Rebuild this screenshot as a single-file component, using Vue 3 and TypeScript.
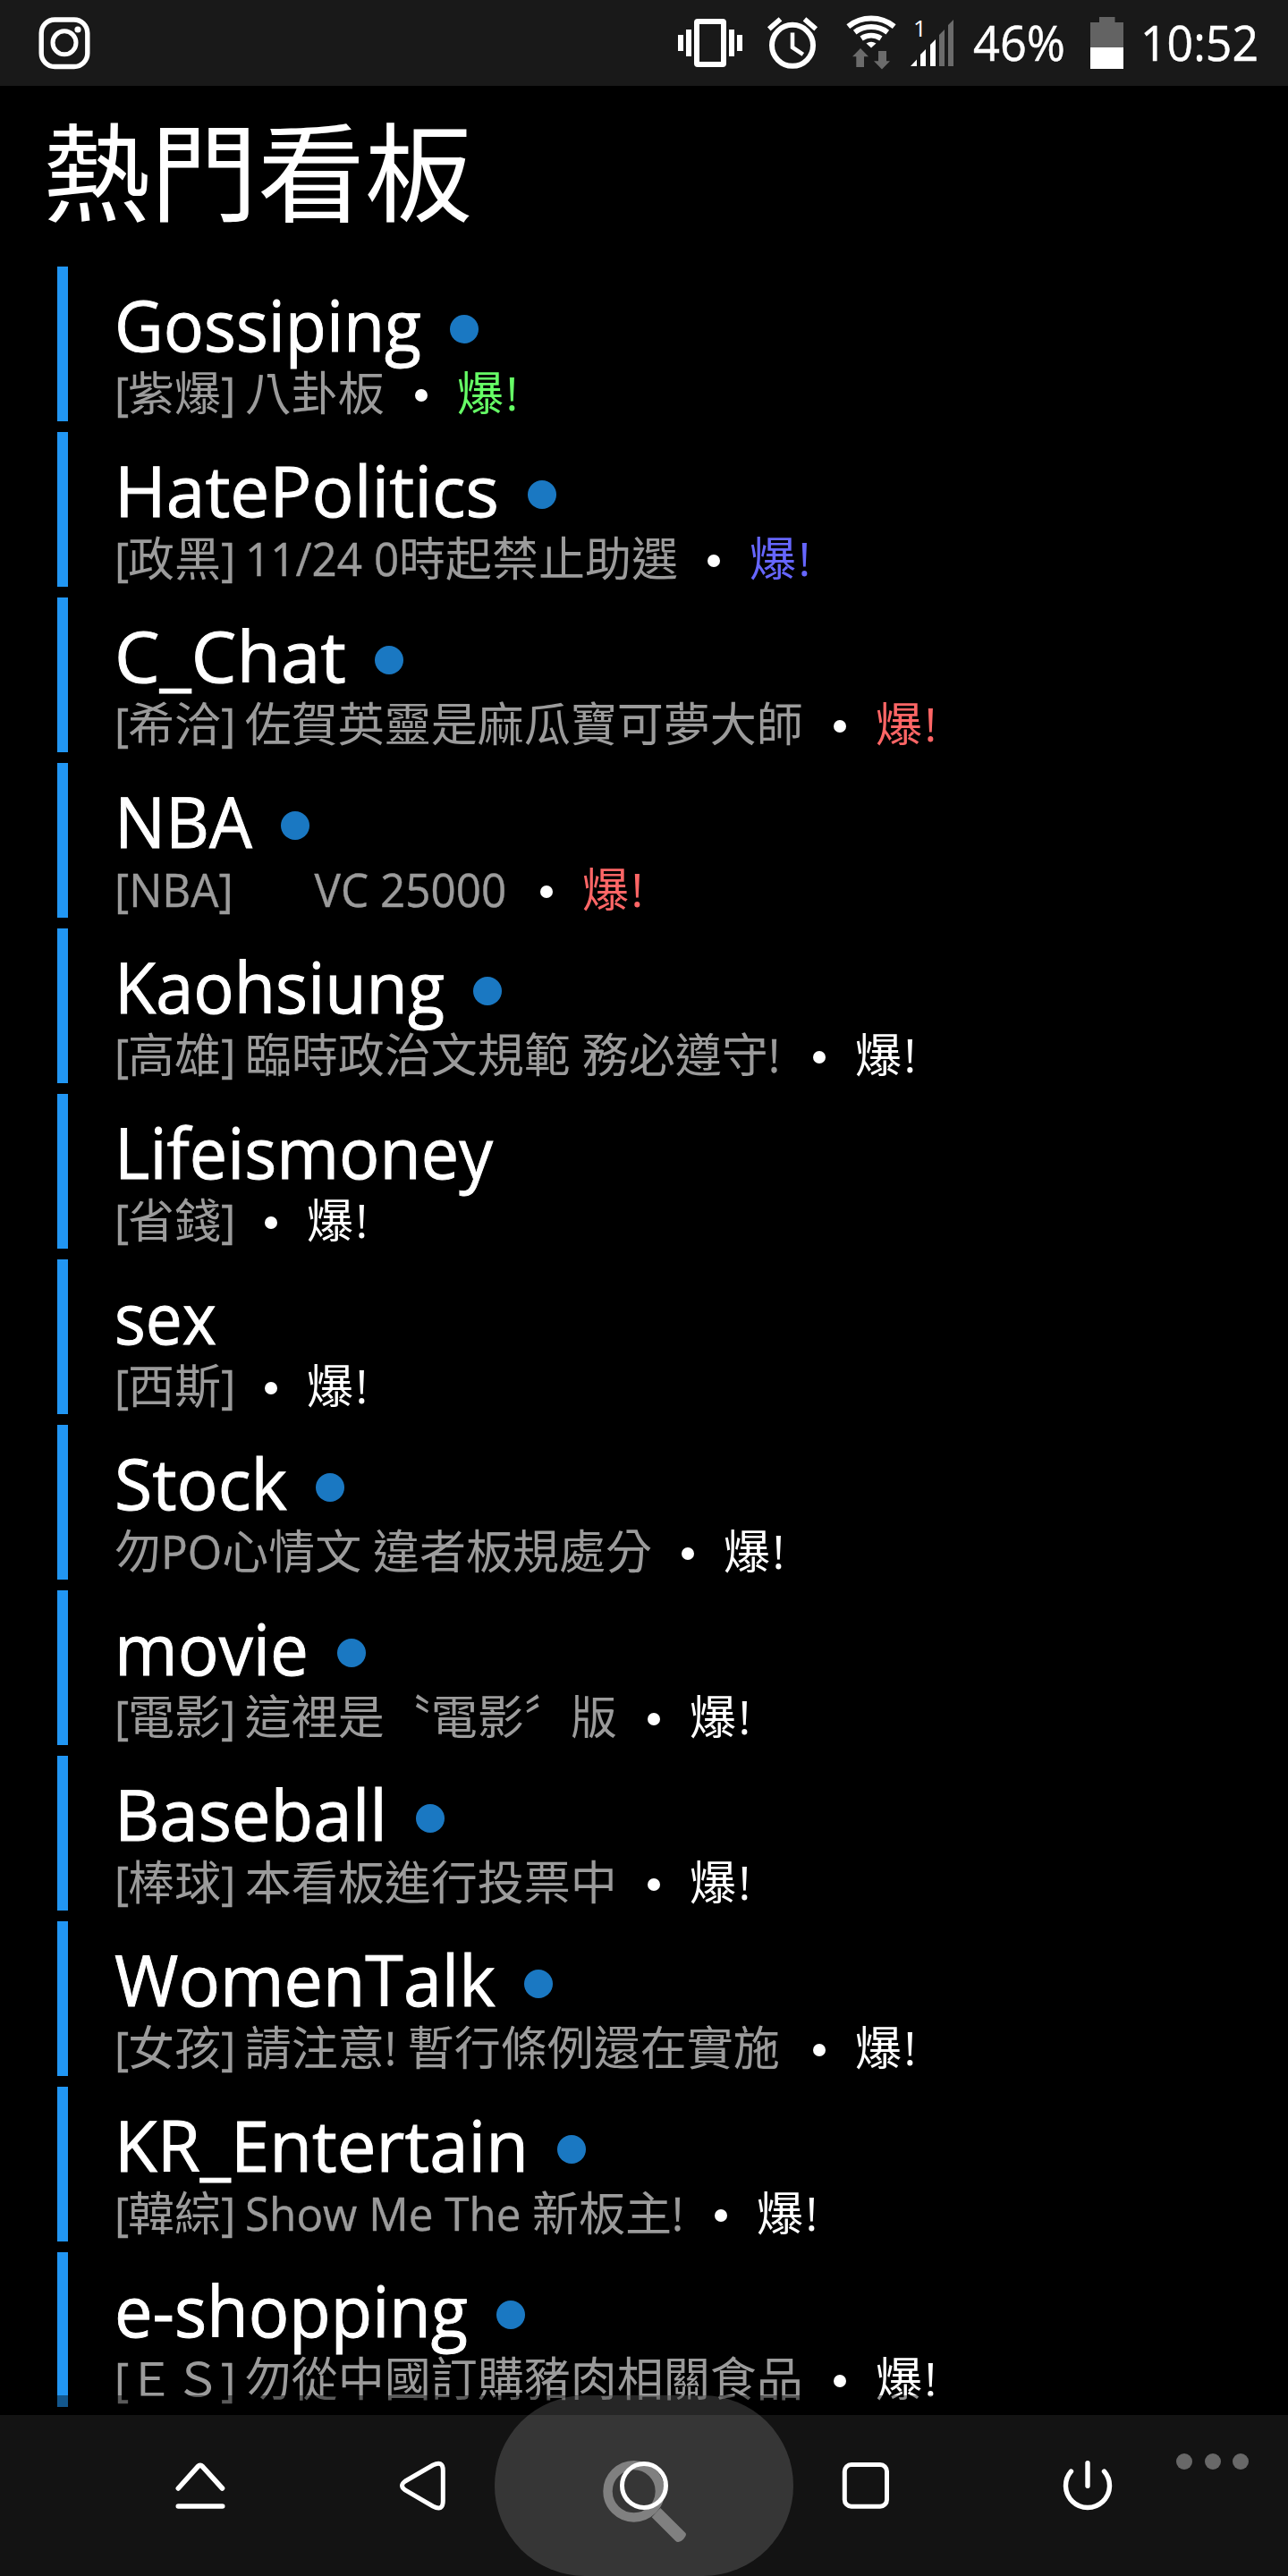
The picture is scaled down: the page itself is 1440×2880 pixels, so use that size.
<script setup lang="ts">
import type { Directive } from 'vue'

interface Board {
  name: string
  nameWidth: number
  title: string
  titleWidth: number
  unread: boolean
  heat: 'green' | 'blue' | 'red' | 'white'
}

interface Run {
  text: string
  latin: boolean
  bracket: boolean
}

const boards: Board[] = [
  { name: 'Gossiping', nameWidth: 343, title: '[紫爆] 八卦板', titleWidth: 302, unread: true, heat: 'green' },
  { name: 'HatePolitics', nameWidth: 430, title: '[政黑] 11/24 0時起禁止助選', titleWidth: 629, unread: true, heat: 'blue' },
  { name: 'C_Chat', nameWidth: 259, title: '[希洽] 佐賀英靈是麻瓜寶可夢大師', titleWidth: 770, unread: true, heat: 'red' },
  { name: 'NBA', nameWidth: 154, title: '[NBA]\u3000   VC 25000', titleWidth: 442, unread: true, heat: 'red' },
  { name: 'Kaohsiung', nameWidth: 369, title: '[高雄] 臨時政治文規範 務必遵守!', titleWidth: 747, unread: true, heat: 'white' },
  { name: 'Lifeismoney', nameWidth: 423, title: '[省錢]', titleWidth: 134, unread: false, heat: 'white' },
  { name: 'sex', nameWidth: 114, title: '[西斯]', titleWidth: 134, unread: false, heat: 'white' },
  { name: 'Stock', nameWidth: 193, title: '勿PO心情文 違者板規處分', titleWidth: 600, unread: true, heat: 'white' },
  { name: 'movie', nameWidth: 217, title: '[電影] 這裡是〝電影〞版', titleWidth: 562, unread: true, heat: 'white' },
  { name: 'Baseball', nameWidth: 305, title: '[棒球] 本看板進行投票中', titleWidth: 562, unread: true, heat: 'white' },
  { name: 'WomenTalk', nameWidth: 426, title: '[女孩] 請注意! 暫行條例還在實施', titleWidth: 747, unread: true, heat: 'white' },
  { name: 'KR_Entertain', nameWidth: 463, title: '[韓綜] Show Me The 新板主!', titleWidth: 637, unread: true, heat: 'white' },
  { name: 'e-shopping', nameWidth: 395, title: '[ＥＳ] 勿從中國訂購豬肉相關食品', titleWidth: 770, unread: true, heat: 'white' },
]

const LATIN_RATIO = 0.95

function runs(text: string): Run[] {
  return (text.match(/\[(?=[^\x20-\x7e])|\] |[\x20-\x7e]+|[^\x20-\x7e]+/g) ?? []).map((t) => ({
    text: t,
    latin: t.charCodeAt(0) < 0x7f,
    bracket: /^[[\]] ?$/.test(t),
  }))
}

function condense(el: HTMLElement, ratio: number) {
  const natural = el.getBoundingClientRect().width
  el.style.transform = `scaleX(${ratio})`
  el.style.marginRight = `${natural * (ratio - 1)}px`
}

// Condenses an inline-block to a width in px.
const vFit: Directive<HTMLElement, number> = {
  mounted: (el, { value }) => condense(el, value / el.getBoundingClientRect().width),
}

// Condenses Latin runs by a fixed ratio and leaves CJK runs alone.
const vCondense: Directive<HTMLElement, boolean> = {
  mounted: (el, { value }) => {
    if (value) condense(el, LATIN_RATIO)
  },
}
</script>

<template>
  <div class="screen">
    <header class="status">
      <svg class="ico" width="58" height="96" viewBox="43 0 58 96" fill="none" stroke="#fff">
        <rect x="46.2" y="22" width="51.6" height="52.5" rx="15" stroke-width="5.4" />
        <circle cx="72" cy="47.8" r="13" stroke-width="5" />
        <circle cx="87" cy="33" r="3.6" fill="#fff" stroke="none" />
      </svg>
      <div class="status-right">
        <svg class="ico vib" width="72" height="96" viewBox="758 0 72 96" fill="#fff">
          <rect x="758" y="39" width="6" height="18" />
          <rect x="767" y="33" width="6" height="30" />
          <path fill-rule="evenodd" d="M780 21H808Q812 21 812 25V71Q812 75 808 75H780Q776 75 776 71V25Q776 21 780 21ZM782 27V69H806V27Z" />
          <rect x="815" y="33" width="6" height="30" />
          <rect x="824" y="39" width="6" height="18" />
        </svg>
        <svg class="ico alarm" width="58" height="96" viewBox="857 0 58 96" fill="none" stroke="#fff">
          <circle cx="886" cy="50.8" r="23" stroke-width="6" />
          <path d="M886 36.5V53L897.8 60.8" stroke-width="4.6" />
          <path d="M859.8 32.3L872.5 21.3M912.2 32.3L899.5 21.3" stroke-width="5.6" />
        </svg>
        <svg class="ico wifi" width="56" height="96" viewBox="946 0 56 96">
          <g fill="none" stroke="#fff" stroke-width="6">
            <path d="M948.3 29.6A41 41 0 0 1 999.7 29.6" />
            <path d="M955.7 36.1A30.8 30.8 0 0 1 992.3 36.1" />
            <path d="M963.1 43A20.5 20.5 0 0 1 984.9 43" />
          </g>
          <path d="M968.5 48.5Q974 44.8 979.5 48.5L974 53.5Z" fill="#fff" />
          <path d="M962 54L971 63.3H966V75H957.3V63.3H953ZM982 57H991V68.3H995L986 77.5L977 68.3H982Z" fill="#6b6b6b" />
        </svg>
        <svg class="ico signal" width="52" height="96" viewBox="1016 0 52 96">
          <text x="1021" y="41" class="sim" fill="#fff">1</text>
          <path d="M1018 74L1025 66.5V74ZM1029 74V61L1035 55V74ZM1040 74V50L1046 44V74Z" fill="#fff" />
          <path d="M1050 74V39L1056 33V74ZM1060 74V28L1066 22V74Z" fill="#6b6b6b" />
        </svg>
        <span v-fit="103" class="label pct">46%</span>
        <svg class="ico bat" width="37" height="96" viewBox="1219 0 37 96">
          <path d="M1229 19H1246.5V25H1256V77H1219V25H1229Z" fill="#636363" />
          <rect x="1219" y="53" width="37" height="24" fill="#fff" />
        </svg>
        <span v-fit="132" class="label">10:52</span>
      </div>
    </header>

    <h1 class="heading">熱門看板</h1>

    <ul class="boards">
      <li v-for="b in boards" :key="b.name" class="board">
        <div class="name-line">
          <span v-fit="b.nameWidth" class="name">{{ b.name }}</span>
          <i v-if="b.unread" class="unread"></i>
        </div>
        <div class="info-line">
          <span class="title" :style="{ width: b.titleWidth + 'px' }"><span
            v-for="(r, i) in runs(b.title)"
            :key="i"
            v-condense="r.latin"
            class="run"
            :class="{ latin: r.latin, bracket: r.bracket }"
          >{{ r.text }}</span></span>
          <i class="sep"></i>
          <span class="heat" :class="b.heat">爆!</span>
        </div>
      </li>
    </ul>

    <nav class="nav">
      <div class="shade"></div>
      <div class="key">
        <svg class="ico" width="80" height="80" viewBox="0 0 80 80" fill="none" stroke="#fff" stroke-width="5.6" stroke-linecap="round" stroke-linejoin="round">
          <path d="M15.3 43L37 18.8Q39.8 16 42.6 18.8L64.5 43M15.3 63H64.7" />
        </svg>
      </div>
      <div class="key">
        <svg class="ico" width="80" height="80" viewBox="0 0 80 80" fill="none" stroke="#fff" stroke-width="5">
          <path d="M21 35L52 17Q63.3 11.5 63.3 23V57Q63.3 69 52 63L21 45Q14 40 21 35Z" />
        </svg>
      </div>
      <div class="key home">
        <div class="pill"></div>
        <svg class="ico" width="80" height="80" viewBox="0 0 80 80" fill="none">
          <circle cx="28.7" cy="46.3" r="29.2" stroke="#808080" stroke-width="10.4" />
          <path d="M58.3 65L86.5 93Q87.6 94.6 86.2 96.8Q83.5 102 78.4 103Q76.6 103.2 75.2 101.8L48.7 75.2Z" fill="#808080" />
          <circle cx="40" cy="40" r="24.5" stroke="#fff" stroke-width="5" />
        </svg>
      </div>
      <div class="key">
        <svg class="ico" width="80" height="80" viewBox="0 0 80 80" fill="none" stroke="#fff" stroke-width="5">
          <rect x="16.3" y="16.5" width="47.2" height="46.7" rx="7.5" />
        </svg>
      </div>
      <div class="key">
        <svg class="ico" width="80" height="80" viewBox="0 0 80 80" fill="none" stroke="#fff" stroke-width="5.4" stroke-linecap="round">
          <path d="M21.5 24A24.5 24.5 0 1 0 58.5 24M40 14.7V40.3" />
        </svg>
      </div>
      <div class="more"><i></i><i></i><i></i></div>
    </nav>
  </div>
</template>

<style>
body {
  margin: 0;
  background: #000;
}
</style>

<style scoped>
.screen {
  display: flex;
  flex-direction: column;
  width: 1440px;
  height: 2880px;
  overflow: hidden;
  background: #000;
  color: #fff;
  font-family: 'Open Sans', 'Noto Sans CJK TC', sans-serif;
}

.ico {
  display: block;
  flex: none;
  overflow: visible;
}

.status {
  display: flex;
  flex: none;
  justify-content: space-between;
  height: 96px;
  padding: 0 33px 0 43px;
  background: #191919;
}

.status-right {
  display: flex;
}

.alarm {
  margin-left: 27px;
}

.wifi {
  margin-left: 31px;
}

.signal {
  margin-left: 14px;
}

.sim {
  font-size: 26px;
  font-weight: 500;
}

.label {
  display: inline-block;
  flex: none;
  font-size: 55px;
  line-height: 94px;
  white-space: pre;
  transform-origin: left center;
  -webkit-text-stroke: 0.5px currentColor;
}

.pct {
  margin-left: 20px;
}

.bat {
  margin: 0 19px 0 28px;
}

.heading {
  flex: none;
  box-sizing: border-box;
  height: 202px;
  margin: 0;
  padding: 19px 0 0 48px;
  font-family: 'Noto Sans CJK TC', sans-serif;
  font-size: 120px;
  font-weight: 400;
  line-height: 144px;
}

.boards {
  display: flex;
  flex: 1;
  flex-direction: column;
  gap: 12px;
  min-height: 0;
  margin: 0;
  padding: 0 0 0 64px;
  list-style: none;
}

.board {
  flex: none;
  box-sizing: border-box;
  height: 173px;
  padding: 25px 0 0 52px;
  border-left: 12px solid #2196f3;
}

.name-line,
.info-line {
  display: flex;
  align-items: center;
  white-space: pre;
}

.name-line {
  height: 80px;
}

.name {
  display: inline-block;
  font-size: 79px;
  line-height: 80px;
  transform-origin: left center;
  -webkit-text-stroke: 0.9px currentColor;
}

.unread {
  width: 32px;
  height: 32px;
  margin: 10px 0 0 32px;
  border-radius: 50%;
  background: #1a78c2;
}

.info-line {
  height: 60px;
  margin-top: 6px;
  font-size: 52px;
  line-height: 60px;
}

.title {
  flex: none;
  color: #9b9b9b;
}

.run {
  display: inline-block;
  transform-origin: left center;
}

.latin {
  -webkit-text-stroke: 0.4px currentColor;
}

.bracket {
  letter-spacing: -1.2px;
}

.sep {
  width: 14px;
  height: 14px;
  margin: 6px 33px 0 34px;
  border-radius: 50%;
  background: #fff;
}

.heat {
  letter-spacing: 2.5px;
}

.green {
  color: #66ff66;
}

.blue {
  color: #6666ff;
}

.red {
  color: #ff6666;
}

.nav {
  position: relative;
  display: flex;
  flex: none;
  box-sizing: border-box;
  height: 180px;
  padding: 39px 0 0 100px;
  background: #131313;
}

.shade {
  position: absolute;
  top: -22px;
  left: 0;
  width: 100%;
  height: 22px;
  background: rgba(0, 0, 0, 0.42);
}

.key {
  position: relative;
  display: flex;
  justify-content: center;
  width: 248px;
}

.home .ico {
  position: relative;
}

.pill {
  position: absolute;
  top: -61px;
  left: -43px;
  width: 334px;
  height: 202px;
  border-radius: 101px;
  background: rgba(255, 255, 255, 0.15);
}

.more {
  position: absolute;
  top: 43px;
  left: 1315px;
  display: flex;
  gap: 13.5px;
}

.more i {
  width: 18px;
  height: 18px;
  border-radius: 50%;
  background: #686868;
}
</style>
